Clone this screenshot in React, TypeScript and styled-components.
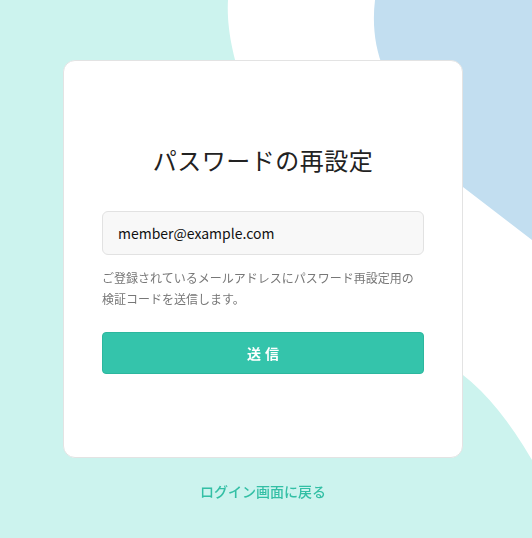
import styled, { createGlobalStyle } from "styled-components";

const GlobalStyle = createGlobalStyle`
  * {
    box-sizing: border-box;
  }
  body {
    margin: 0;
    background-color: #ccf3ee;
    font-family: "Noto Sans CJK JP", "Noto Sans", sans-serif;
  }
`;

const Backdrop = styled.svg`
  position: fixed;
  top: 0;
  left: 0;
  width: 532px;
  height: 538px;
  z-index: 0;
`;

const Page = styled.main`
  position: relative;
  z-index: 1;
  min-height: 100vh;
  display: flex;
  flex-direction: column;
  align-items: center;
  padding: 60px 6px 0 0;
`;

const Card = styled.section`
  width: 400px;
  background-color: #fff;
  border: 1px solid #e3e3e3;
  border-radius: 12px;
  padding: 81px 38px 83px;
  display: flex;
  flex-direction: column;
`;

const Title = styled.h1`
  margin: 0;
  font-size: 24px;
  line-height: 36px;
  font-weight: 400;
  color: #222;
  text-align: center;
  letter-spacing: 0.5px;
`;

const EmailInput = styled.input`
  margin-top: 33px;
  height: 44px;
  width: 100%;
  padding: 0 15px;
  background-color: #f8f8f8;
  border: 1px solid #e2e2e2;
  border-radius: 6px;
  font-family: "Noto Sans CJK JP", "Noto Sans", sans-serif;
  font-size: 14px;
  color: #111;
  outline: none;
`;

const HelpText = styled.p`
  margin: 12px 0 0;
  font-size: 12px;
  line-height: 21px;
  color: #777;
`;

const SubmitButton = styled.button`
  margin-top: 23px;
  height: 42px;
  width: 100%;
  background-color: #34c4ab;
  border: 1px solid #2cb79e;
  border-radius: 4px;
  color: #fff;
  font-family: "Noto Sans CJK JP", "Noto Sans", sans-serif;
  font-size: 14px;
  font-weight: 700;
  letter-spacing: 4px;
  text-indent: 4px;
  cursor: pointer;
`;

const BackLink = styled.a`
  margin-top: 23px;
  font-size: 14px;
  line-height: 20px;
  font-weight: 500;
  color: #33bfa5;
  text-decoration: none;
`;

const App = () => {
  return (
    <>
      <GlobalStyle />
      <Backdrop viewBox="0 0 532 538" aria-hidden="true">
        <path
          d="M228,0 C225,50 250,130 320,220 C370,285 430,345 463,375 Q498.5,402.5 532,460 L532,0 Z"
          fill="#ffffff"
        />
        <path
          d="M375,0 C372,25 375,50 385,72 C400,110 430,150 463,187 L532,240 L532,0 Z"
          fill="#c2def0"
        />
      </Backdrop>
      <Page>
        <Card>
          <Title>パスワードの再設定</Title>
          <EmailInput type="email" defaultValue="member@example.com" />
          <HelpText>
            ご登録されているメールアドレスにパスワード再設定用の検証コードを送信します。
          </HelpText>
          <SubmitButton type="button">送信</SubmitButton>
        </Card>
        <BackLink href="#">ログイン画面に戻る</BackLink>
      </Page>
    </>
  );
};

export default App;
